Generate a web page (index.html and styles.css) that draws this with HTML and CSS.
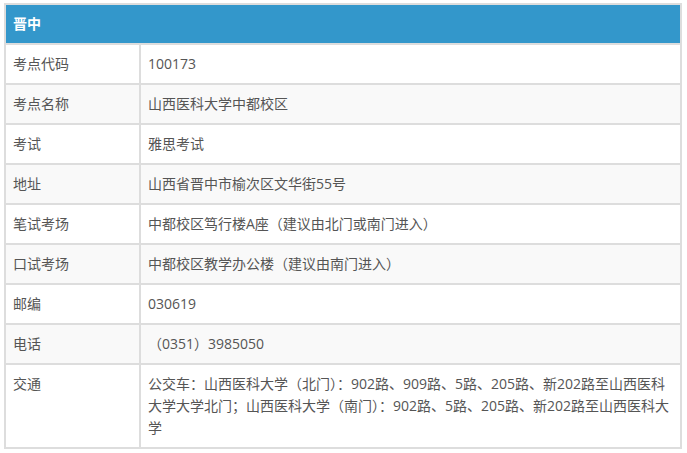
FILE: index.html
```html
<!DOCTYPE html>
<html lang="zh-CN">
<head>
<meta charset="utf-8">
<link rel="stylesheet" href="styles.css">
</head>
<body>
<table class="info">
  <colgroup>
    <col class="col-k">
    <col class="col-v">
  </colgroup>
  <thead>
    <tr><th colspan="2">晋中</th></tr>
  </thead>
  <tbody>
    <tr><td>考点代码</td><td>100173</td></tr>
    <tr><td>考点名称</td><td>山西医科大学中都校区</td></tr>
    <tr><td>考试</td><td>雅思考试</td></tr>
    <tr><td>地址</td><td>山西省晋中市榆次区文华街55号</td></tr>
    <tr><td>笔试考场</td><td>中都校区笃行楼A座（建议由北门或南门进入）</td></tr>
    <tr><td>口试考场</td><td>中都校区教学办公楼（建议由南门进入）</td></tr>
    <tr><td>邮编</td><td>030619</td></tr>
    <tr><td>电话</td><td>（0351）3985050</td></tr>
    <tr><td>交通</td><td>公交车：山西医科大学（北门）：902路、909路、5路、205路、新202路至山西医科大学大学北门；山西医科大学（南门）：902路、5路、205路、新202路至山西医科大学</td></tr>
  </tbody>
</table>
</body>
</html>
```
FILE: styles.css
```css
html, body {
  margin: 0;
  padding: 0;
  background: #fff;
}
body {
  padding: 3px 0 0 4px;
  font-family: "Open Sans", "Noto Sans CJK SC", sans-serif;
  font-size: 14px;
  color: #555;
}
.info {
  width: 678px;
  border-collapse: separate;
  border-spacing: 0;
  border-top: 2px solid #dddddd;
  border-left: 2px solid #dddddd;
  table-layout: fixed;
}
.col-k {
  width: 135px;
}
.info th,
.info td {
  border-right: 2px solid #dddddd;
  border-bottom: 2px solid #dddddd;
  padding: 8px 7px;
  line-height: 22px;
  text-align: left;
  vertical-align: top;
  font-weight: normal;
}
.info th {
  background: #3397cb;
  color: #fff;
  font-weight: bold;
}
.info tbody tr:nth-child(even) td {
  background: #f9f9f9;
}
.info tbody tr:nth-child(odd) td {
  background: #fff;
}
```
